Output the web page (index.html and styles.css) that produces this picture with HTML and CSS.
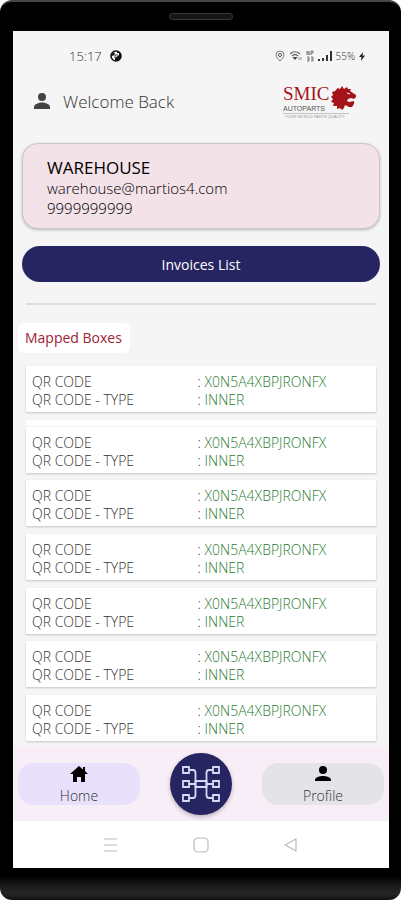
FILE: index.html
```html
<!DOCTYPE html>
<html lang="en">

<head>
    <meta charset="UTF-8">
    <meta name="viewport" content="width=device-width, initial-scale=1.0">
    <title>Warehouse - Mapped Boxes</title>
    <link rel="stylesheet" href="styles.css">
</head>

<body>
    <div class="phone">
        <div class="speaker-bar"><span class="speaker"></span></div>

        <div class="screen">
            <!-- Status bar -->
            <div class="status-bar">
                <span class="time">15:17</span>
                <svg class="status-app" width="12" height="12" viewBox="0 0 12 12">
                    <circle cx="6" cy="6" r="5" fill="#fff" stroke="#111" stroke-width="1.6" />
                    <path d="M7 1a5 5 0 0 1 2 9L5 11V8l4-3V3H7z" fill="#111" />
                    <path d="M1 5l3-3 1 2-2 2z" fill="#111" />
                    <path d="M5 8V5h3" fill="none" stroke="#444" stroke-width="1" />
                </svg>
                <div class="status-icons">
                    <svg width="10" height="12" viewBox="0 0 10 12" fill="none" stroke="#777" stroke-width="1">
                        <path d="M5 11C3 9 1 7 1 5a4 4 0 0 1 8 0c0 2-2 4-4 6z" />
                        <circle cx="5" cy="5" r="1.6" stroke="#555" />
                    </svg>
                    <svg width="13" height="12" viewBox="0 0 13 12" fill="none" stroke="#666" stroke-width="1.2">
                        <path d="M1 4c3-3 7-3 10 0M3 6c2-2 4-2 6 0" />
                        <path d="M3.500 7h5L6 10z" fill="#444" stroke="none" />
                        <path d="M10 7v3M12 7v3" stroke="#999" stroke-width="1" />
                    </svg>
                    <svg width="8" height="12" viewBox="0 0 8 12" fill="none" stroke="#777" stroke-width="1">
                        <path d="M1 5V1l2 4V1M5 1v4M5 1h2v2H5M1 7h2v4H1M5 7h2v4H5M1 9h2M5 9h2" />
                    </svg>
                    <svg width="14" height="12" viewBox="0 0 14 12" fill="#333">
                        <path d="M0 9h2v2H0zM4 8h2v3H4zM8 5h2v6H8zM12 1h2v10h-2z" />
                    </svg>
                    <span class="battery">55%</span>
                    <svg width="6" height="12" viewBox="0 0 6 12" fill="#222">
                        <path d="M4 2 0 7h2.500L2 11l4-5.500H3.500z" />
                    </svg>
                </div>
            </div>

            <!-- Header -->
            <header class="header">
                <svg class="user-icon" width="18" height="18" viewBox="0 0 18 18" fill="#444">
                    <circle cx="9" cy="5" r="4" />
                    <path d="M1 17v-2c0-3 5-4.500 8-4.500s8 1.500 8 4.500v2z" />
                </svg>
                <span class="welcome">Welcome Back</span>
                <svg class="logo" width="74" height="36" viewBox="0 0 74 36" role="img" aria-label="SMIC Autoparts">
                    <text class="logo-name" x="0" y="17">SMIC</text>
                    <text class="logo-sub" x="0" y="28">AUTOPARTS</text>
                    <path d="M0 30.500h66" stroke="#c3c3c3" stroke-width="1" />
                    <text class="logo-tag" x="2" y="35">YOUR WORLD PARTS QUALITY</text>
                    <path fill="#a5141b" d="M52 8 54 6 54 5 57 6 59 3 61 6 64 4 65 6 68 6 67 8 70 10 73 12 73 14 71 16 68 15 65 16 64 18 66 19 71 18 71 21 69 24 66 24 62 22 61 25 59 27 57 25 54 26 54 23 50 23 51 20 48 19 50 16 48 14 50 12 49 9z" />
                    <path d="M64 10l3 1" fill="none" stroke="#f5f5f5" stroke-width="1" />
                </svg>
            </header>

            <main class="content">
                <section class="account">
                    <h1>WAREHOUSE</h1>
                    <p>warehouse@martios4.com</p>
                    <p>9999999999</p>
                </section>

                <button class="invoices-button" type="button">Invoices List</button>

                <hr class="divider">

                <h2 class="section-title">Mapped Boxes</h2>

                <ul class="box-list">
                    <li>
                        <dl class="box">
                            <dt>QR CODE</dt>
                            <dd>: <span>X0N5A4XBPJRONFX</span></dd>
                            <dt>QR CODE - TYPE</dt>
                            <dd>: <span>INNER</span></dd>
                        </dl>
                    </li>
                    <li class="stacked">
                        <dl class="box">
                            <dt>QR CODE</dt>
                            <dd>: <span>X0N5A4XBPJRONFX</span></dd>
                            <dt>QR CODE - TYPE</dt>
                            <dd>: <span>INNER</span></dd>
                        </dl>
                    </li>
                    <li>
                        <dl class="box">
                            <dt>QR CODE</dt>
                            <dd>: <span>X0N5A4XBPJRONFX</span></dd>
                            <dt>QR CODE - TYPE</dt>
                            <dd>: <span>INNER</span></dd>
                        </dl>
                    </li>
                    <li>
                        <dl class="box">
                            <dt>QR CODE</dt>
                            <dd>: <span>X0N5A4XBPJRONFX</span></dd>
                            <dt>QR CODE - TYPE</dt>
                            <dd>: <span>INNER</span></dd>
                        </dl>
                    </li>
                    <li>
                        <dl class="box">
                            <dt>QR CODE</dt>
                            <dd>: <span>X0N5A4XBPJRONFX</span></dd>
                            <dt>QR CODE - TYPE</dt>
                            <dd>: <span>INNER</span></dd>
                        </dl>
                    </li>
                    <li>
                        <dl class="box">
                            <dt>QR CODE</dt>
                            <dd>: <span>X0N5A4XBPJRONFX</span></dd>
                            <dt>QR CODE - TYPE</dt>
                            <dd>: <span>INNER</span></dd>
                        </dl>
                    </li>
                    <li>
                        <dl class="box">
                            <dt>QR CODE</dt>
                            <dd>: <span>X0N5A4XBPJRONFX</span></dd>
                            <dt>QR CODE - TYPE</dt>
                            <dd>: <span>INNER</span></dd>
                        </dl>
                    </li>
                </ul>
            </main>

            <!-- Bottom navigation -->
            <nav class="bottom-nav">
                <a href="#home" class="nav-item active">
                    <svg width="18" height="18" viewBox="0 0 18 18" fill="#000">
                        <path d="M9 1 0 9h3v8h4v-5h4v5h4V9h3l-3-3V2h-2v2.500z" />
                    </svg>
                    Home
                </a>
                <button class="scan-button" type="button" aria-label="Map boxes">
                    <svg width="40" height="40" viewBox="0 0 40 40" fill="none" stroke="#d5daf5" stroke-width="1.8">
                        <path d="M2 3h6v6H2zM2 17h6v6H2zM2 31h6v6H2zM32 3h6v6h-6zM32 17h6v6h-6zM32 31h6v6h-6z" />
                        <path d="M14.500 17h11v6h-11z" />
                        <path d="M8 6h4q2.500 0 2.500 3v22q0 3-2.500 3H8M32 6h-4q-2.500 0-2.500 3v22q0 3 2.500 3h4M8 20h6.500M25.500 20H32" />
                    </svg>
                </button>
                <a href="#profile" class="nav-item">
                    <svg width="18" height="18" viewBox="0 0 18 18" fill="#000">
                        <circle cx="9" cy="5" r="4" />
                        <path d="M1 16v-1c0-3 5-4 8-4s8 1 8 4v1z" />
                    </svg>
                    Profile
                </a>
            </nav>

            <!-- System buttons -->
            <div class="system-bar">
                <button type="button" aria-label="Recent apps">
                    <svg width="16" height="16" viewBox="0 0 16 16" fill="none" stroke="#bbb" stroke-width="1.2">
                        <path d="M1 2h13M1 8h13M1 14h13" />
                    </svg>
                </button>
                <button type="button" aria-label="Home screen">
                    <svg width="16" height="16" viewBox="0 0 16 16" fill="none" stroke="#bbb" stroke-width="1.2">
                        <rect x="1" y="1" width="14" height="14" rx="4" />
                    </svg>
                </button>
                <button type="button" aria-label="Back">
                    <svg width="16" height="16" viewBox="0 0 16 16" fill="none" stroke="#bbb" stroke-width="1.2" stroke-linejoin="round">
                        <path d="M13 2v12L2 8z" />
                    </svg>
                </button>
            </div>
        </div>
    </div>
</body>

</html>
```
FILE: styles.css
```css
* {
    box-sizing: border-box;
}

body {
    font-family: "Open Sans", "Noto Sans", sans-serif;
    font-weight: 300;
    margin: 0;
    background-color: #fff;
    color: #333;
}

h1,
h2,
p,
ul,
dl,
dd {
    margin: 0;
    padding: 0;
    font-weight: inherit;
}

button {
    border: none;
    padding: 0;
    background: none;
    font-family: inherit;
    cursor: pointer;
}

svg {
    display: block;
    flex: none;
}

.phone {
    display: flex;
    flex-direction: column;
    min-height: 100vh;
    padding: 0 12px 32px 13px;
    background: linear-gradient(to top, #111 0, #262626 6px, #1c1c1c 14px, #000 24px);
    border-top: 2px solid #444;
    border-radius: 12px;
}

.speaker-bar {
    display: flex;
    justify-content: center;
    align-items: center;
    height: 29px;
}

.speaker {
    width: 64px;
    height: 7px;
    border: 1px solid #3a3a3a;
    border-radius: 4px;
    background-color: #151515;
}

.screen {
    flex: 1;
    display: flex;
    flex-direction: column;
    background-color: #f5f5f5;
}

/* Status bar */
.status-bar {
    display: flex;
    align-items: center;
    padding: 15px 24px 0 56px;
    height: 35px;
    font-size: 13px;
    line-height: 20px;
}

.status-app {
    margin-left: 8px;
}

.status-icons {
    display: flex;
    align-items: center;
    gap: 4px;
    margin-left: auto;
}

.battery {
    font-size: 10px;
}

/* Header */
.header {
    display: flex;
    align-items: center;
    height: 70px;
    padding: 0 32px 0 20px;
}

.welcome {
    margin-left: 12px;
    font-size: 17px;
}

.logo {
    margin-left: auto;
}

.logo-name {
    font-family: "Liberation Serif", serif;
    font-weight: 400;
    font-size: 19px;
    fill: #a5141b;
}

.logo-sub {
    font-family: "Liberation Sans", sans-serif;
    font-weight: 400;
    font-size: 7px;
    fill: #555;
}

.logo-tag {
    font-family: "Liberation Sans", sans-serif;
    font-size: 4px;
    fill: #999;
}

/* Content */
.content {
    flex: 1;
    display: flex;
    flex-direction: column;
    padding: 7px 9px 0;
}

.account {
    padding: 14px 24px 10px;
    border: 1px solid #cfc6ca;
    border-radius: 16px;
    background-color: #f4e2e9;
    box-shadow: 0 1px 3px rgba(0, 0, 0, 0.25);
    color: #000;
    font-size: 15px;
    line-height: 20px;
}

.account h1 {
    font-size: 17px;
    font-weight: 400;
}

.invoices-button {
    height: 36px;
    margin-top: 17px;
    border-radius: 18px;
    background-color: #272462;
    color: #fff;
    font-size: 14px;
}

.divider {
    width: calc(100% - 8px);
    height: 2px;
    margin: 21px 4px 18px;
    border: none;
    background-color: #ddd;
}

.section-title {
    align-self: flex-start;
    margin-left: -4px;
    padding: 5px 8px 5px 7px;
    border-radius: 6px;
    background-color: #fff;
    color: #a02034;
    font-size: 14px;
    font-weight: 400;
    line-height: 20px;
}

.box-list {
    flex: 1;
    display: flex;
    flex-direction: column;
    justify-content: space-between;
    padding: 13px 4px 5px;
    list-style: none;
}

.box {
    display: grid;
    grid-template-columns: 49% 1fr;
    padding: 7px 6px 3px;
    background-color: #fff;
    box-shadow: 0 1px 2px rgba(0, 0, 0, 0.2);
    font-size: 14px;
    line-height: 18px;
}

.box span {
    color: #267a30;
}

/* Edge of the card that lies underneath */
.stacked::before {
    content: "";
    display: block;
    height: 6px;
    margin-bottom: 1px;
    background-color: #fff;
}

/* Bottom navigation */
.bottom-nav {
    display: flex;
    justify-content: space-between;
    align-items: center;
    height: 75px;
    padding: 0 5px;
    background-color: #f8eef8;
}

.nav-item {
    display: flex;
    flex-direction: column;
    align-items: center;
    width: 122px;
    height: 42px;
    padding-top: 2px;
    border-radius: 16px;
    background-color: #e4e3e8;
    color: #333;
    font-size: 14px;
    line-height: 26px;
    text-decoration: none;
}

.nav-item.active {
    background-color: #e9e0fb;
}

.scan-button {
    display: flex;
    justify-content: center;
    align-items: center;
    width: 62px;
    height: 62px;
    border-radius: 50%;
    background-color: #272462;
    box-shadow: 0 2px 4px rgba(0, 0, 0, 0.25);
}

/* System buttons */
.system-bar {
    display: flex;
    justify-content: center;
    align-items: center;
    gap: 74px;
    height: 47px;
    background-color: #fff;
}
```
